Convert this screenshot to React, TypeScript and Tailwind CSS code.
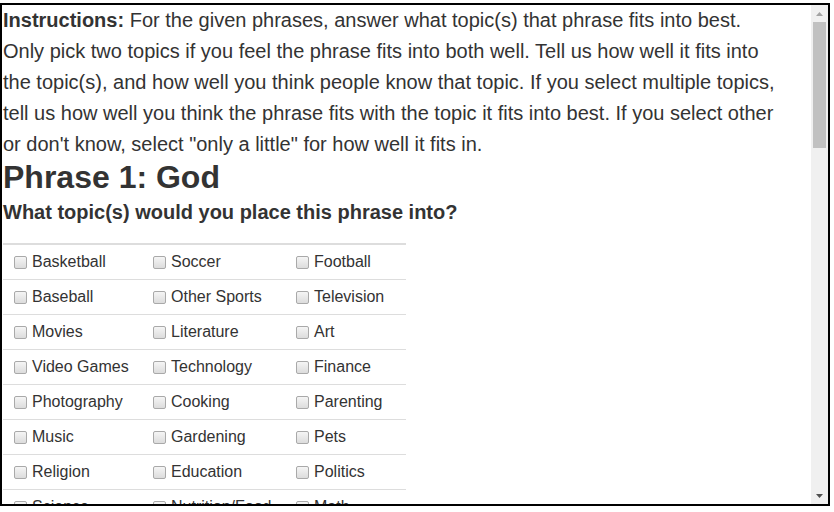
const topics: string[][] = [
  ['Basketball', 'Soccer', 'Football'],
  ['Baseball', 'Other Sports', 'Television'],
  ['Movies', 'Literature', 'Art'],
  ['Video Games', 'Technology', 'Finance'],
  ['Photography', 'Cooking', 'Parenting'],
  ['Music', 'Gardening', 'Pets'],
  ['Religion', 'Education', 'Politics'],
  ['Science', 'Nutrition/Food', 'Math'],
];

const colWidths = ['w-[139px]', 'w-[143px]', 'w-[121px]'];

const Box = () => (
  <span className="inline-block w-[13px] h-[13px] shrink-0 rounded-[2px] border border-[#a9a9a9] bg-gradient-to-b from-[#f5f5f5] to-[#dcdcdc]" />
);

const Topic = ({ label, width }: { label: string; width: string }) => (
  <div className={`${width} flex items-center pl-[11px] gap-[5px]`}>
    <Box />
    <span>{label}</span>
  </div>
);

export default function App() {
  return (
    <div className="w-[834px] h-[512px] bg-white pt-[3px] overflow-hidden" style={{ fontFamily: '"Liberation Sans", Arial, sans-serif' }}>
      <div className="w-[830px] h-[503px] border-2 border-black flex overflow-hidden">
        {/* page content */}
        <div className="flex-1 overflow-hidden text-[#333] pl-[1px]">
          <p className="w-[799px] text-[20px] leading-[31px]">
            <b>Instructions:</b> For the given phrases, answer what topic(s) that phrase fits into best.<br />
            Only pick two topics if you feel the phrase fits into both well. Tell us how well it fits into<br />
            the topic(s), and how well you think people know that topic. If you select multiple topics,<br />
            tell us how well you think the phrase fits with the topic it fits into best. If you select other<br />
            or don't know, select "only a little" for how well it fits in.
          </p>
          <h1 className="text-[32px] font-bold leading-[35px]">Phrase 1: God</h1>
          <h3 className="text-[20px] font-bold leading-[22px] mt-[6px]">What topic(s) would you place this phrase into?</h3>
          <div className="mt-[20px] w-[403px] border-t-2 border-[#ddd] text-[16px]">
            {topics.map((row, i) => (
              <div key={i} className="flex h-[35px] border-b border-[#ddd]">
                {row.map((t, j) => (
                  <Topic key={t} label={t} width={colWidths[j]} />
                ))}
              </div>
            ))}
          </div>
        </div>
        {/* scrollbar */}
        <div className="w-[17px] h-full bg-[#f0f0f0] flex flex-col items-center">
          <div className="h-[17px] w-full flex items-center justify-center">
            <svg width="7" height="4" viewBox="0 0 7 4"><path d="M0 4 L3.5 0 L7 4 Z" fill="#a3a3a3" /></svg>
          </div>
          <div className="w-[13px] h-[126px] bg-[#c1c1c1]" />
          <div className="flex-1" />
          <div className="h-[17px] w-full flex items-center justify-center">
            <svg width="7" height="4" viewBox="0 0 7 4"><path d="M0 0 L7 0 L3.5 4 Z" fill="#505050" /></svg>
          </div>
        </div>
      </div>
    </div>
  );
}
